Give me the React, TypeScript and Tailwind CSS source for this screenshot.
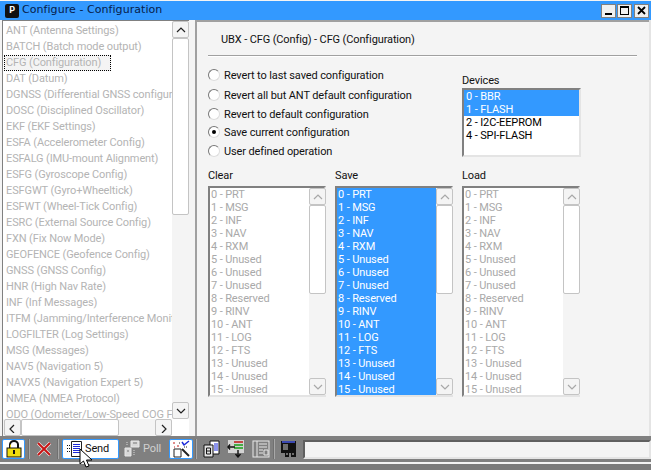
const navItems = [
  "ANT (Antenna Settings)",
  "BATCH (Batch mode output)",
  "CFG (Configuration)",
  "DAT (Datum)",
  "DGNSS (Differential GNSS configuration)",
  "DOSC (Disciplined Oscillator)",
  "EKF (EKF Settings)",
  "ESFA (Accelerometer Config)",
  "ESFALG (IMU-mount Alignment)",
  "ESFG (Gyroscope Config)",
  "ESFGWT (Gyro+Wheeltick)",
  "ESFWT (Wheel-Tick Config)",
  "ESRC (External Source Config)",
  "FXN (Fix Now Mode)",
  "GEOFENCE (Geofence Config)",
  "GNSS (GNSS Config)",
  "HNR (High Nav Rate)",
  "INF (Inf Messages)",
  "ITFM (Jamming/Interference Monitor)",
  "LOGFILTER (Log Settings)",
  "MSG (Messages)",
  "NAV5 (Navigation 5)",
  "NAVX5 (Navigation Expert 5)",
  "NMEA (NMEA Protocol)",
  "ODO (Odometer/Low-Speed COG Filter)",
];

const ports = [
  "0 - PRT",
  "1 - MSG",
  "2 - INF",
  "3 - NAV",
  "4 - RXM",
  "5 - Unused",
  "6 - Unused",
  "7 - Unused",
  "8 - Reserved",
  "9 - RINV",
  "10 - ANT",
  "11 - LOG",
  "12 - FTS",
  "13 - Unused",
  "14 - Unused",
  "15 - Unused",
];

const radios = [
  { label: "Revert to last saved configuration", gap: "h-[20px]" },
  { label: "Revert all but ANT default configuration", gap: "h-[19px]" },
  { label: "Revert to default configuration", gap: "h-[18px]" },
  { label: "Save current configuration", checked: true, gap: "h-[19px]" },
  { label: "User defined operation", gap: "h-[19px]" },
];

function Chevron({ dir }: { dir: "up" | "down" | "left" | "right" }) {
  const d = {
    up: "M1 6 L5 2 L9 6",
    down: "M1 2 L5 6 L9 2",
    left: "M6 1 L2 5 L6 9",
    right: "M3 1 L7 5 L3 9",
  }[dir];
  return (
    <svg width="10" height="10" viewBox="0 0 10 8" fill="none" stroke="currentColor" strokeWidth="1.2">
      <path d={d} />
    </svg>
  );
}

function ScrollButton({ dir, muted }: { dir: "up" | "down" | "left" | "right"; muted?: boolean }) {
  return (
    <div
      className={`flex h-[17px] w-[17px] shrink-0 items-center justify-center rounded-[2px] border border-[#c4c4c4] bg-[#f4f4f4] ${
        muted ? "text-[#a8a8a8]" : "text-[#222]"
      }`}
    >
      <Chevron dir={dir} />
    </div>
  );
}

function PortList({ title, selected }: { title: string; selected?: boolean }) {
  return (
    <div className="flex w-[118px] flex-col">
      <div className="h-[17px] leading-[14px] text-[#111]">{title}</div>
      <div className="flex h-[211px] border-t-2 border-r-2 border-b-2 border-l-2 border-t-[#808080] border-r-[#e4e4e4] border-b-[#e4e4e4] border-l-[#808080] bg-white">
        <div className={`w-[99px] shrink-0 ${selected ? "bg-[#3399ff] text-white" : "text-[#a9a9a9]"}`}>
          {ports.map((p) => (
            <div key={p} className="h-[13px] pl-[1px] leading-[13px] whitespace-nowrap">
              {p}
            </div>
          ))}
        </div>
        <div className="flex w-[17px] flex-col bg-[#f4f4f4]">
          <ScrollButton dir="up" muted />
          <div className="h-[89px] w-[17px] rounded-[2px] border border-[#c4c4c4] bg-white" />
          <div className="flex-1" />
          <ScrollButton dir="down" muted />
        </div>
      </div>
    </div>
  );
}

function Sep({ className }: { className: string }) {
  return <div className={`${className} h-[20px] w-[2px] shrink-0 border-r border-[#a8a8a8] bg-[#707070]`} />;
}

function LockIcon() {
  return (
    <svg width="16" height="18" viewBox="0 0 16 18">
      <path d="M4 8 V4.5 a4 3.5 0 0 1 8 0 V8" fill="none" stroke="#111" strokeWidth="2" />
      <path d="M4.5 8 V4.5" stroke="#e8d020" />
      <rect x="1" y="8" width="14" height="9" fill="#f0dc10" stroke="#111" />
      <rect x="7" y="10" width="2" height="4" fill="#111" />
    </svg>
  );
}

function CrossIcon() {
  return (
    <svg width="16" height="16" viewBox="0 0 16 16">
      <path d="M2 2 L14 14 M14 2 L2 14" stroke="#e8e8e8" strokeWidth="3.2" />
      <path d="M2 2 L14 14 M14 2 L2 14" stroke="#c81414" strokeWidth="2" />
    </svg>
  );
}

function SendIcon() {
  return (
    <svg width="16" height="16" viewBox="0 0 16 16">
      <path d="M4.5 0.5 H14.5 V15.5 H4.5 Z" fill="#fff" stroke="#222" />
      <path d="M6 3.5 H13 M6 5.5 H13 M6 7.5 H13 M6 9.5 H13 M6 11.5 H13" stroke="#1a28d8" />
      <path d="M0 4.5 H3 M0 7.5 H3 M0 10.5 H3" stroke="#111" strokeDasharray="1 1" />
    </svg>
  );
}

function PollIcon() {
  return (
    <svg width="18" height="18" viewBox="0 0 18 18">
      <path d="M7 1 H15 V7 H7 Z" fill="#d8d8d8" stroke="#e8e8e8" />
      <path d="M1 8 H7 V16 H1 Z" fill="#d8d8d8" stroke="#e8e8e8" />
      <path d="M9 3 H13 M3 11 H5" stroke="#777" />
      <path d="M3 2 V6 M10 10 V15" stroke="#d8d8d8" strokeDasharray="1 1" />
    </svg>
  );
}

function ToolsIcon() {
  return (
    <svg width="20" height="18" viewBox="0 0 20 18">
      <path d="M3 9 H10 V17 H3 Z" fill="#fff" stroke="#222" />
      <path d="M11 2 L13 5 L18 1" fill="none" stroke="#1a28d8" strokeWidth="1.5" />
      <path d="M11 9 L18 16" stroke="#222" strokeWidth="2" />
      <path d="M2 3 H4 M6 6 H8 M3 7 H4" stroke="#c01818" />
      <path d="M8 3 H10 M13 7 H16" stroke="#222" strokeDasharray="1 1" />
    </svg>
  );
}

function ExportIcon() {
  return (
    <svg className="ml-[6px]" width="17" height="18" viewBox="0 0 17 18">
      <path d="M7 1 H16 V14 H7 Z" fill="#fff" stroke="#111" />
      <path d="M11 4 H15 M11 6 H15 M11 8 H15 M11 10 H15" stroke="#1a28d8" />
      <path d="M1 5 H10 V17 H1 Z" fill="#e4e4e4" stroke="#111" />
      <path d="M3.5 8 H7.5 V14 H3.5 Z M7.5 8 V11 H3.5" fill="none" stroke="#111" />
    </svg>
  );
}

function CompareIcon() {
  return (
    <svg className="ml-[7px]" width="18" height="18" viewBox="0 0 18 18">
      <rect x="1" y="0" width="16" height="13" fill="#d4d4d4" />
      <path d="M7 2 H16" stroke="#c01818" strokeWidth="1.5" />
      <path d="M7 5 H16" stroke="#18a018" strokeWidth="1.5" />
      <path d="M7 8 H16" stroke="#18a018" strokeWidth="1.5" />
      <path d="M8 7 H1 M3 4.5 L1 7 L3 9.5" fill="none" stroke="#111" strokeWidth="1.4" />
      <path d="M11 10 V17 M8.5 14 L11 17 L13.5 14" fill="none" stroke="#111" strokeWidth="1.4" />
    </svg>
  );
}

function SheetIcon() {
  return (
    <svg className="ml-[7px]" width="18" height="18" viewBox="0 0 18 18">
      <rect x="1" y="1" width="16" height="16" fill="#808080" stroke="#e8e8e8" />
      <path d="M5 1 V17 M7 4 H15 M7 7 H15 M7 10 H11 M7 13 H11 M12 10 H16 V15 H12 Z" fill="none" stroke="#e8e8e8" />
    </svg>
  );
}

function DbIcon() {
  return (
    <svg className="ml-[5px]" width="18" height="18" viewBox="0 0 18 18">
      <rect x="1" y="1" width="15" height="12" fill="#111" />
      <rect x="2" y="1" width="13" height="2" fill="#3a48b0" />
      <path d="M3 5 H8 M3 7 H8 M3 9 H8" stroke="#ccc" />
      <path d="M5 11 H9 V17 H5 Z M11 11 H16 V17 H11 Z" fill="#111" />
      <path d="M7 13 V15 M13 13 V15" stroke="#ccc" />
    </svg>
  );
}

export default function App() {
  return (
    <div className="flex h-[470px] w-[651px] flex-col overflow-hidden bg-[#f4f4f4] font-['Roboto',Arial,sans-serif] text-[11px] tracking-[-0.12px]">
      {/* title bar */}
      <div className="flex h-[20px] shrink-0 items-center border-t border-[#f4f4f4] bg-[#3399ff] pl-[5px] pr-[2px]">
        <div className="flex h-[14px] w-[14px] items-center justify-center rounded-[2px] bg-[#111] text-[9px] leading-none font-bold text-white">
          P
        </div>
        <span className="ml-[3px] font-['DejaVu_Sans',sans-serif] text-[11px] tracking-[0.06px] text-[#06204a]">Configure - Configuration</span>
        <div className="ml-auto flex gap-[1px]">
          <div className="flex h-[14px] w-[15px] items-end justify-center border border-[#808080] bg-[#f0f0f0] pb-[2px]">
            <div className="h-[2px] w-[7px] bg-black" />
          </div>
          <div className="flex h-[14px] w-[15px] items-center justify-center border border-[#808080] bg-[#f0f0f0]">
            <div className="h-[9px] w-[9px] border border-t-2 border-black" />
          </div>
          <div className="ml-[1px] flex h-[14px] w-[15px] items-center justify-center border border-[#808080] bg-[#f0f0f0]">
            <svg width="9" height="9" viewBox="0 0 9 9">
              <path d="M1 1 L8 8 M8 1 L1 8" stroke="#000" strokeWidth="1.8" />
            </svg>
          </div>
        </div>
      </div>

      {/* body */}
      <div className="flex h-[416px] shrink-0 border-r-2 border-r-[#e4e4e4] pl-[2px]">
        {/* left tree */}
        <div className="flex h-full w-[187px] shrink-0 flex-col border-t border-l border-[#808080] bg-white">
          <div className="flex min-h-0 flex-1">
            <div className="w-[169px] shrink-0 overflow-hidden bg-white pt-[2px] pl-[1px]">
              {navItems.map((n) => (
                <div
                  key={n}
                  className={`h-[16px] whitespace-nowrap pl-[2px] leading-[16px] text-[#b4b4b4] ${
                    n.startsWith("CFG") ? "w-[107px] border border-dotted border-black bg-[#f4f4f4] !pl-[1px] !leading-[14px]" : ""
                  }`}
                >
                  {n}
                </div>
              ))}
            </div>
            <div className="flex w-[17px] shrink-0 flex-col bg-[#f4f4f4]">
              <ScrollButton dir="up" />
              <div className="h-[177px] rounded-[2px] border border-[#c4c4c4] bg-white" />
              <div className="flex-1" />
              <ScrollButton dir="down" />
            </div>
          </div>
          <div className="flex h-[17px] w-[169px] shrink-0 bg-[#f4f4f4] pl-[1px]">
            <ScrollButton dir="left" />
            <div className="h-[17px] w-[98px] rounded-[2px] border border-[#c4c4c4] bg-white" />
            <div className="flex-1" />
            <ScrollButton dir="right" />
          </div>
        </div>

        {/* right panel */}
        <div className="ml-[6px] flex min-w-0 flex-1 flex-col border-t-2 border-l-2 border-t-[#a0a0a0] border-l-[#a0a0a0] pl-[11px]">
          <div className="mt-[11px] ml-[13px] leading-[14px] text-[#111]">UBX - CFG (Config) - CFG (Configuration)</div>
          <div className="mt-[8px] mr-[12px] h-[2px] border-t border-b border-t-[#a0a0a0] border-b-white" />

          <div className="mt-[12px] flex">
            <div className="flex w-[254px] flex-col">
              {radios.map((r) => (
                <div key={r.label} className={`flex ${r.gap} items-start`}>
                  <div className="flex h-[12px] w-[12px] items-center justify-center rounded-full border border-t-[#777] border-r-[#ddd] border-b-[#ddd] border-l-[#777] bg-white">
                    {r.checked && <div className="h-[4px] w-[4px] rounded-full bg-black" />}
                  </div>
                  <span className="ml-[4px] leading-[14px] whitespace-nowrap text-[#111]">{r.label}</span>
                </div>
              ))}
            </div>
            <div className="mt-[5px] flex flex-col">
              <div className="h-[14px] leading-[14px] text-[#111]">Devices</div>
              <div className="h-[69px] w-[119px] border-t-2 border-r-2 border-b-2 border-l-2 border-t-[#808080] border-r-[#e4e4e4] border-b-[#e4e4e4] border-l-[#808080] bg-white">
                <div className="h-[13px] bg-[#3399ff] pl-[2px] leading-[13px] text-white">0 - BBR</div>
                <div className="h-[13px] bg-[#3399ff] pl-[2px] leading-[13px] text-white">1 - FLASH</div>
                <div className="h-[13px] pl-[2px] leading-[13px] text-black">2 - I2C-EEPROM</div>
                <div className="h-[13px] pl-[2px] leading-[13px] text-black">4 - SPI-FLASH</div>
              </div>
            </div>
          </div>

          <div className="mt-[5px] flex gap-[9px]">
            <PortList title="Clear" />
            <PortList title="Save" selected />
            <PortList title="Load" />
          </div>
        </div>
      </div>

      {/* toolbar */}
      <div className="relative flex h-[26px] shrink-0 items-center bg-[#808080] pl-[2px]">
        <div className="flex h-[20px] w-[23px] items-center justify-center rounded-[2px] border border-[#3399ff] bg-white">
          <LockIcon />
        </div>
        <Sep className="ml-[3px]" />
        <div className="ml-[6px] flex h-[20px] w-[16px] items-center justify-center">
          <CrossIcon />
        </div>
        <Sep className="ml-[5px]" />
        <div className="ml-[3px] flex h-[20px] w-[57px] items-center gap-[2px] rounded-[2px] border border-[#3399ff] bg-white pl-[4px] text-[#111]">
          <SendIcon />
          Send
        </div>
        <div className="ml-[5px] flex w-[40px] items-center gap-[1px] text-[#d0d0d0]">
          <PollIcon />
          Poll
        </div>
        <div className="ml-[5px] flex h-[20px] w-[24px] items-center justify-center rounded-[2px] border border-[#3399ff] bg-white">
          <ToolsIcon />
        </div>
        <Sep className="ml-[2px]" />
        <ExportIcon />
        <CompareIcon />
        <SheetIcon />
        <Sep className="ml-[3px]" />
        <DbIcon />
        <div className="ml-[5px] h-[19px] min-w-0 flex-1 border-t-2 border-r-2 border-b-2 border-l-2 border-t-[#606060] border-r-[#e4e4e4] border-b-[#e4e4e4] border-l-[#606060] bg-[#f4f4f4]" />
        {/* mouse pointer over the Send button */}
        <svg className="absolute top-[12px] left-[79px]" width="14" height="20" viewBox="0 0 14 20">
          <path d="M1 1 V16 L4.5 13 L7 19 L10 18 L7.5 12 L13 12 Z" fill="#fff" stroke="#000" />
        </svg>
      </div>

      {/* status strip */}
      <div className="min-h-0 flex-1 border-t-2 border-[#f4f4f4] bg-[#7b7b7b]" />
    </div>
  );
}
